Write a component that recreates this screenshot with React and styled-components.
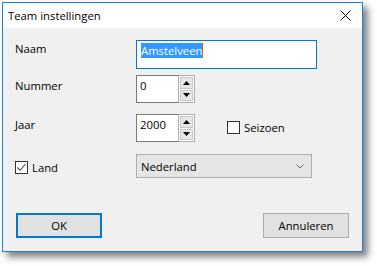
import React from 'react'
import styled, { createGlobalStyle } from 'styled-components'

const Global = createGlobalStyle`
  body {
    margin: 0;
    background: #ffffff;
    font-family: "Open Sans", "Noto Sans", sans-serif;
    font-size: 11.3px;
  }
`

const Page = styled.div`
  padding: 2px 0 0 2px;
  width: 377px;
  height: 266px;
  box-sizing: border-box;
`

const Window = styled.div`
  width: 361px;
  height: 250px;
  box-sizing: border-box;
  border: 1px solid #1883d7;
  background: #f0f0f0;
  box-shadow: 5px 5px 7px rgba(0, 0, 0, 0.5);
  display: flex;
  flex-direction: column;
`

const TitleBar = styled.div`
  height: 25px;
  background: #ffffff;
  display: flex;
  align-items: center;
  justify-content: space-between;
  padding: 0 11px 0 5px;
  color: #000;
`

const Body = styled.div`
  flex: 1;
  padding: 12px 12px 0 12px;
  display: flex;
  flex-direction: column;
`

const Form = styled.div`
  display: grid;
  grid-template-columns: 121px 1fr;
  align-items: start;
  justify-items: start;
`

const Label = styled.div`
  color: #000;
  margin-top: ${p => p.$top || 0}px;
  display: flex;
  align-items: center;
  gap: 4px;
`

const Field = styled.div`
  margin-top: ${p => p.$top || 0}px;
`

const TextInput = styled.div`
  width: 181px;
  height: 29px;
  box-sizing: border-box;
  border: 1px solid #0078d7;
  background: #fff;
  padding: 2px 4px;
`

const Selected = styled.span`
  background: #3399ff;
  color: #fff;
  border-right: 1px solid #d06000;
`

const SpinRow = styled.div`
  display: flex;
  align-items: flex-start;
  gap: 32px;
`

const Spin = styled.div`
  display: flex;
  height: 28px;
  width: 59px;
  box-sizing: border-box;
  border: 1px solid #7a7a7a;
  border-right: none;
  background: #fff;
`

const SpinValue = styled.div`
  flex: 1;
  padding: 2px 3px;
`

const SpinButtons = styled.div`
  width: 17px;
  box-sizing: border-box;
  display: flex;
  flex-direction: column;
  gap: 1px;
  background: #fff;
  border: 1px solid #adadad;
  margin: -1px 0;
  padding: 1px;
`

const SpinButton = styled.div`
  flex: 1;
  background: #e6e6e6;
  border: 1px solid #c8c8c8;
  display: flex;
  align-items: center;
  justify-content: center;
`

const Check = styled.div`
  width: 13px;
  height: 13px;
  box-sizing: border-box;
  border: 1px solid #333;
  background: #fff;
  display: flex;
  align-items: center;
  justify-content: center;
`

const CheckLabel = styled.div`
  display: flex;
  align-items: center;
  gap: 4px;
  padding-top: 6px;
`

const Select = styled.div`
  width: 176px;
  height: 24px;
  box-sizing: border-box;
  border: 1px solid #adadad;
  background: #e5e5e5;
  display: flex;
  align-items: center;
  justify-content: space-between;
  padding: 0 7px 0 4px;
`

const Footer = styled.div`
  margin-top: auto;
  margin-bottom: 13px;
  display: flex;
  justify-content: space-between;
  padding: 0 1px 0 1px;
`

const Button = styled.div`
  width: 86px;
  height: 25px;
  box-sizing: border-box;
  border: ${p => (p.$default ? '2px solid #0078d7' : '1px solid #adadad')};
  background: #e1e1e1;
  display: flex;
  align-items: center;
  justify-content: center;
`

const Arrow = ({ up }) => (
  <svg width="7" height="4" viewBox="0 0 7 4">
    <path d={up ? 'M0 4 L3.5 0 L7 4 Z' : 'M0 0 L3.5 4 L7 0 Z'} fill="#000" />
  </svg>
)

const Spinner = ({ value }) => (
  <Spin>
    <SpinValue>{value}</SpinValue>
    <SpinButtons>
      <SpinButton><Arrow up /></SpinButton>
      <SpinButton><Arrow /></SpinButton>
    </SpinButtons>
  </Spin>
)

const Tick = () => (
  <svg width="11" height="11" viewBox="0 0 11 11">
    <path d="M1.5 5.5 L4.2 8.3 L9.5 2" fill="none" stroke="#444" strokeWidth="1.1" />
  </svg>
)

export default function App() {
  return (
    <Page>
      <Global />
      <Window>
        <TitleBar>
          <span>Team instellingen</span>
          <svg width="11" height="11" viewBox="0 0 11 11">
            <path d="M0.5 0.5 L10.5 10.5 M10.5 0.5 L0.5 10.5" stroke="#000" strokeWidth="1" />
          </svg>
        </TitleBar>
        <Body>
          <Form>
            <Label $top={1}>Naam</Label>
            <Field><TextInput><Selected>Amstelveen</Selected></TextInput></Field>
            <Label $top={9}>Nummer</Label>
            <Field $top={6}><Spinner value="0" /></Field>
            <Label $top={14}>Jaar</Label>
            <Field $top={11}>
              <SpinRow>
                <Spinner value="2000" />
                <CheckLabel><Check />Seizoen</CheckLabel>
              </SpinRow>
            </Field>
            <Label $top={18}><Check><Tick /></Check>Land</Label>
            <Field $top={12}>
              <Select>
                <span>Nederland</span>
                <svg width="8" height="5" viewBox="0 0 8 5">
                  <path d="M0.5 0.5 L4 4 L7.5 0.5" fill="none" stroke="#666" strokeWidth="1" />
                </svg>
              </Select>
            </Field>
          </Form>
          <Footer>
            <Button $default>OK</Button>
            <Button>Annuleren</Button>
          </Footer>
        </Body>
      </Window>
    </Page>
  )
}
